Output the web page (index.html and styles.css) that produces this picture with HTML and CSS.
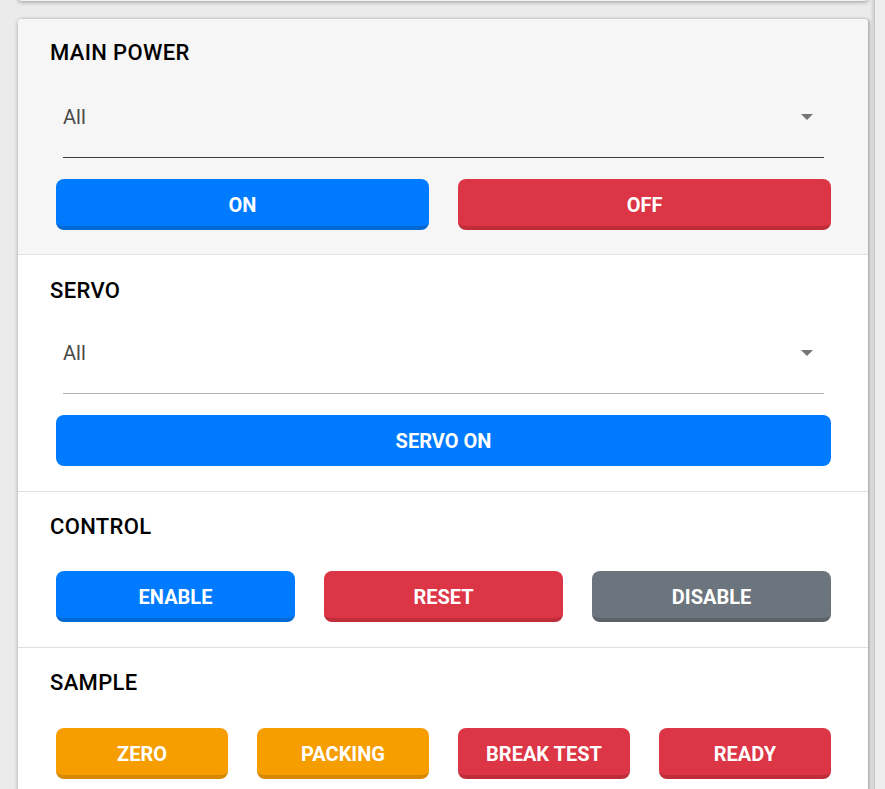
FILE: index.html
```html
<!DOCTYPE html>
<html lang="en">
<head>
<meta charset="utf-8">
<title>Controls</title>
<link rel="stylesheet" href="styles.css">
</head>
<body>
<div class="page">
  <div class="col-main">
    <div class="prev-card"></div>
    <div class="card">
      <section class="sec sec-power">
        <h2 class="title">MAIN POWER</h2>
        <div class="select select-dark">
          <span class="select-value">All</span>
          <span class="caret"></span>
        </div>
        <div class="btn-row cols-2">
          <button class="btn btn-blue">ON</button>
          <button class="btn btn-red">OFF</button>
        </div>
      </section>
      <section class="sec sec-servo">
        <h2 class="title">SERVO</h2>
        <div class="select select-light">
          <span class="select-value">All</span>
          <span class="caret"></span>
        </div>
        <div class="btn-row cols-1">
          <button class="btn btn-blue btn-flat">SERVO ON</button>
        </div>
      </section>
      <section class="sec sec-control">
        <h2 class="title">CONTROL</h2>
        <div class="btn-row cols-3">
          <button class="btn btn-blue">ENABLE</button>
          <button class="btn btn-red">RESET</button>
          <button class="btn btn-gray">DISABLE</button>
        </div>
      </section>
      <section class="sec sec-sample">
        <h2 class="title">SAMPLE</h2>
        <div class="btn-row cols-4">
          <button class="btn btn-orange">ZERO</button>
          <button class="btn btn-orange">PACKING</button>
          <button class="btn btn-red">BREAK TEST</button>
          <button class="btn btn-red">READY</button>
        </div>
      </section>
    </div>
  </div>
  <div class="col-side">
    <div class="side-card"></div>
  </div>
</div>
</body>
</html>
```

FILE: styles.css
```css
* { box-sizing: border-box; }
html, body { margin: 0; padding: 0; }
body {
  background: #ebebeb;
  font-family: Roboto, "Noto Sans", sans-serif;
  overflow: hidden;
}
.page {
  display: grid;
  grid-template-columns: 850px 1fr;
  column-gap: 7px;
  padding-left: 18px;
  height: 789px;
  overflow: hidden;
}
.col-main { display: flex; flex-direction: column; }
.prev-card {
  height: 20px;
  margin-top: -19px;
  background: #f2f2f2;
  border-radius: 0 0 4px 4px;
  box-shadow: 0 1px 4px rgba(0,0,0,.35);
}
.card {
  margin-top: 18px;
  background: #fff;
  border-radius: 4px;
  box-shadow: 0 1px 4px rgba(0,0,0,.3), 2px 0 3px rgba(0,0,0,.15);
  overflow: hidden;
}
.side-card {
  height: 100%;
  margin-top: -4px;
  background: #eeeeee;
  box-shadow: -1px 0 4px rgba(0,0,0,.25);
}
.sec {
  padding: 22px 37px 24px 38px;
  border-bottom: 1px solid #e0e0e0;
}
.sec-power { background: #f6f6f6; }
.sec-servo { padding-top: 24px; padding-bottom: 25px; }
.sec-control { padding-top: 23px; padding-bottom: 25px; }
.sec-sample { padding-top: 23px; border-bottom: none; }
.title {
  margin: 0 0 0 -6px;
  font-size: 22px;
  line-height: 24px;
  font-weight: 500;
  letter-spacing: 0.35px;
  color: #000;
}
.select {
  display: flex;
  align-items: center;
  justify-content: space-between;
  margin: 40px 7px 0 7px;
  padding-bottom: 28px;
  border-bottom: 1px solid #3a3a3a;
}
.sec-servo .select { margin-top: 38px; }
.select-light { border-bottom-color: #b5b5b5; }
.select-value {
  font-size: 20px;
  line-height: 24px;
  color: #4a4a4a;
}
.caret {
  width: 0; height: 0;
  margin-right: 11px;
  border-left: 6px solid transparent;
  border-right: 6px solid transparent;
  border-top: 6px solid #757575;
}
.btn-row {
  display: grid;
  column-gap: 29px;
  margin-top: 21px;
}
.sec-control .btn-row { margin-top: 32px; }
.sec-sample .btn-row { margin-top: 33px; }
.cols-1 { grid-template-columns: 1fr; }
.cols-2 { grid-template-columns: repeat(2, 1fr); }
.cols-3 { grid-template-columns: repeat(3, 1fr); }
.cols-4 { grid-template-columns: repeat(4, 1fr); }
.btn {
  height: 51px;
  border: none;
  border-radius: 8px;
  border-bottom: 4px solid transparent;
  font-family: Roboto, "Noto Sans", sans-serif;
  font-size: 20px;
  font-weight: 700;
  color: #fff;
  padding: 4px 0 0 0;
}
.btn-blue { background: #007bff; border-bottom-color: #0069d3; }
.btn-flat { border-bottom: none; padding-top: 0; }
.btn-red { background: #dc3545; border-bottom-color: #bf2d3b; }
.btn-gray { background: #6c757d; border-bottom-color: #5b6268; }
.btn-orange { background: #f69d00; border-bottom-color: #d68800; }
```
